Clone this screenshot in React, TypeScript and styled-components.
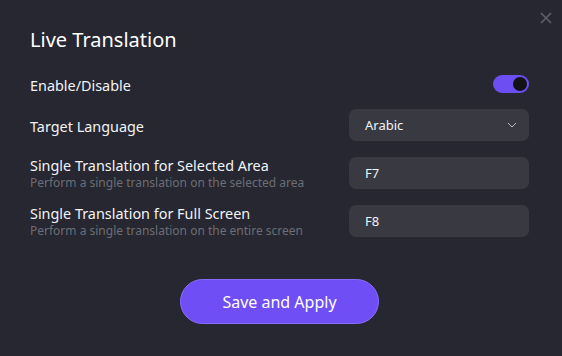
import React, { useState } from 'react'
import styled, { createGlobalStyle } from 'styled-components'

const GlobalStyle = createGlobalStyle`
  html, body {
    margin: 0;
    padding: 0;
    background: #262730;
  }
  body {
    font-family: 'Noto Sans', 'Open Sans', sans-serif;
    -webkit-font-smoothing: antialiased;
  }
`

const Dialog = styled.div`
  position: relative;
  box-sizing: border-box;
  width: 562px;
  height: 356px;
  padding: 26px 33px 0 30px;
  background: #262730;
  color: #f2f3f7;
`

const CloseButton = styled.button`
  position: absolute;
  top: 11px;
  right: 9px;
  width: 14px;
  height: 14px;
  padding: 0;
  border: none;
  background: none;
  color: #5f606a;
  cursor: pointer;
  display: flex;
  align-items: center;
  justify-content: center;
`

const Title = styled.h1`
  margin: 0 0 21px;
  font-size: 20px;
  line-height: 28px;
  font-weight: 400;
  color: #ffffff;
`

const Settings = styled.div`
  display: flex;
  flex-direction: column;
  gap: 16px;
`

const Row = styled.div<{ $height: number }>`
  display: flex;
  align-items: center;
  justify-content: space-between;
  height: ${(p) => p.$height}px;
`

const LabelGroup = styled.div`
  display: flex;
  flex-direction: column;
  padding-top: 1px;
`

const Label = styled.span`
  font-size: 14.4px;
  line-height: 18px;
  color: #f2f3f7;
`

const PlainLabel = styled(Label)`
  padding-top: 3px;
`

const Hint = styled.span`
  font-size: 12px;
  line-height: 15px;
  color: #6c6d76;
`

const Toggle = styled.button<{ $on: boolean }>`
  position: relative;
  width: 36px;
  height: 18px;
  padding: 0;
  border: none;
  border-radius: 9px;
  background: ${(p) => (p.$on ? '#6d4ef2' : '#4a4b53')};
  cursor: pointer;

  &::after {
    content: '';
    position: absolute;
    top: 2px;
    left: ${(p) => (p.$on ? '20px' : '2px')};
    width: 14px;
    height: 14px;
    border-radius: 50%;
    background: #121216;
  }
`

const Field = styled.div`
  box-sizing: border-box;
  width: 180px;
  height: 32px;
  padding: 0 12px 0 16px;
  display: flex;
  align-items: center;
  justify-content: space-between;
  border-radius: 7px;
  background: #393a41;
  font-size: 13px;
  color: #f2f3f7;
`

const Chevron = styled.svg`
  width: 10px;
  height: 6px;
  color: #b9bac0;
`

const Footer = styled.div`
  display: flex;
  justify-content: center;
  margin-top: 42px;
`

const PrimaryButton = styled.button`
  box-sizing: border-box;
  width: 199px;
  height: 45px;
  border: 1px solid #8a6dff;
  border-radius: 23px;
  background: #6f4ef6;
  color: #ffffff;
  font-family: 'Noto Sans', 'Open Sans', sans-serif;
  font-size: 16px;
  cursor: pointer;
`

export default function App() {
  const [enabled, setEnabled] = useState(true)

  return (
    <>
      <GlobalStyle />
      <Dialog>
        <CloseButton aria-label="Close">
          <svg width="12" height="12" viewBox="0 0 12 12" fill="none" stroke="currentColor" strokeWidth="1.6">
            <path d="M1 1l10 10M11 1L1 11" />
          </svg>
        </CloseButton>

        <Title>Live Translation</Title>

        <Settings>
          <Row $height={18}>
            <PlainLabel>Enable/Disable</PlainLabel>
            <Toggle $on={enabled} onClick={() => setEnabled(!enabled)} aria-label="Enable/Disable" />
          </Row>

          <Row $height={32}>
            <PlainLabel>Target Language</PlainLabel>
            <Field>
              Arabic
              <Chevron viewBox="0 0 10 6" fill="none" stroke="currentColor" strokeWidth="1">
                <path d="M1 1l4 4 4-4" />
              </Chevron>
            </Field>
          </Row>

          <Row $height={32}>
            <LabelGroup>
              <Label>Single Translation for Selected Area</Label>
              <Hint>Perform a single translation on the selected area</Hint>
            </LabelGroup>
            <Field>F7</Field>
          </Row>

          <Row $height={32}>
            <LabelGroup>
              <Label>Single Translation for Full Screen</Label>
              <Hint>Perform a single translation on the entire screen</Hint>
            </LabelGroup>
            <Field>F8</Field>
          </Row>
        </Settings>

        <Footer>
          <PrimaryButton>Save and Apply</PrimaryButton>
        </Footer>
      </Dialog>
    </>
  )
}
